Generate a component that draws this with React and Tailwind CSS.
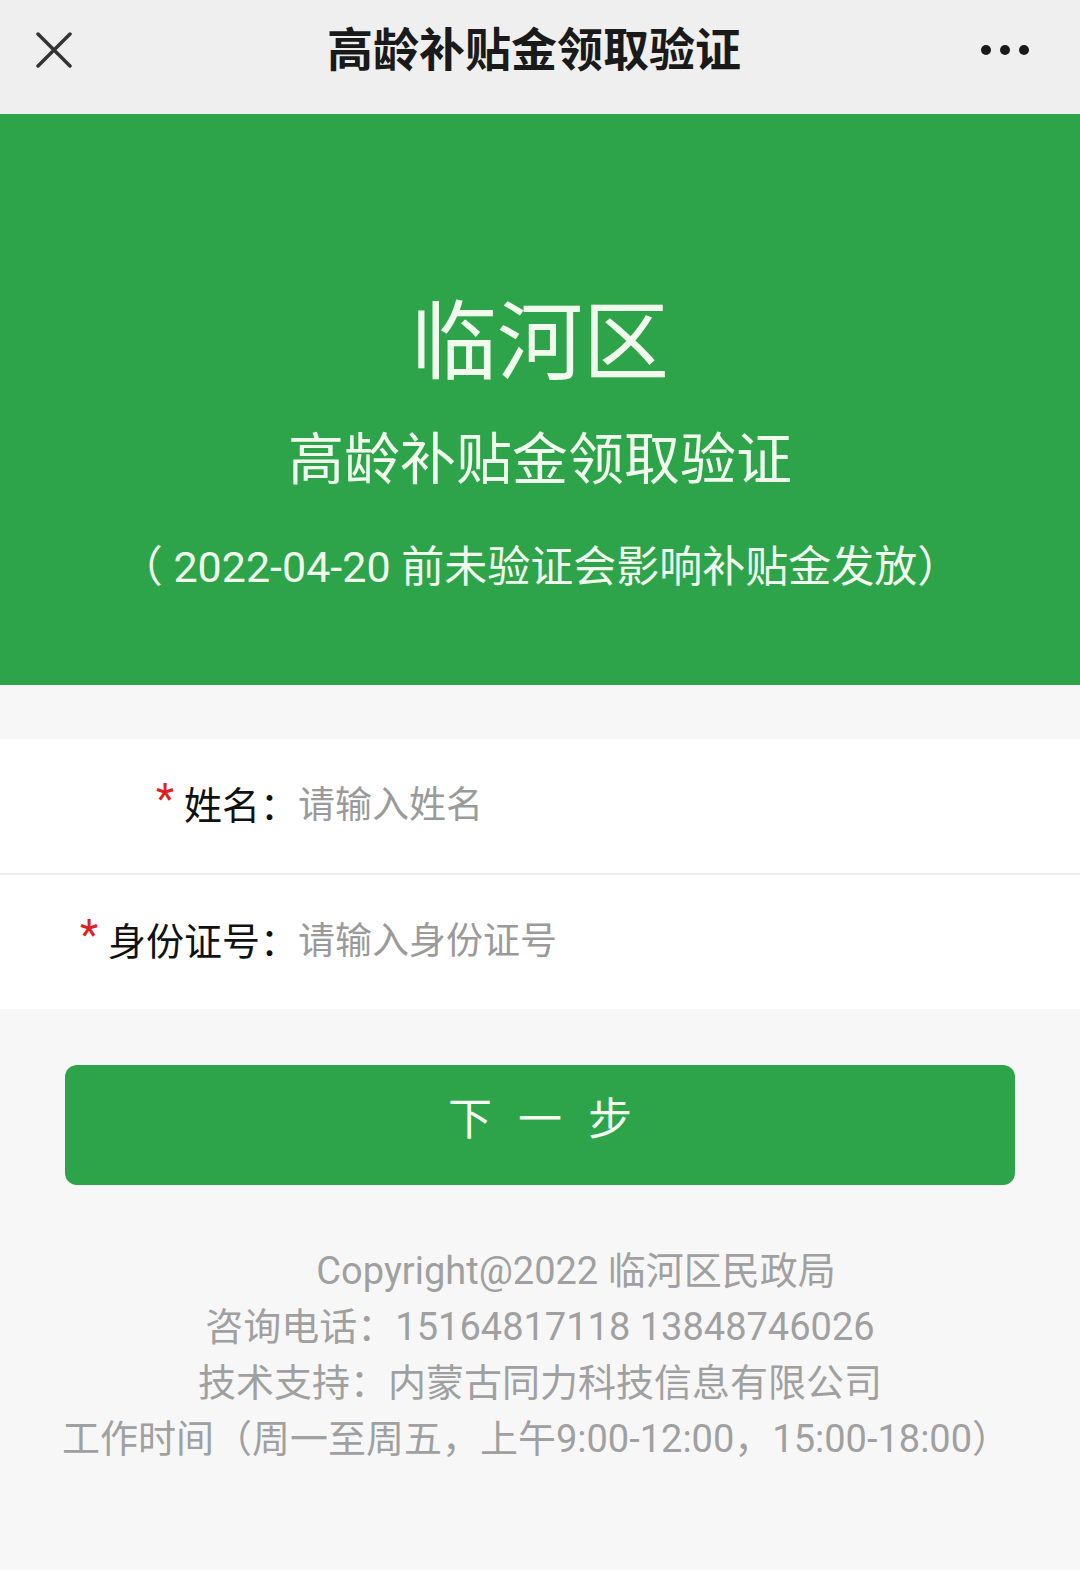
import React from 'react';

const font = { fontFamily: 'Roboto, "Noto Sans CJK SC", "Noto Sans", sans-serif' };

const Field = ({ label, placeholder }) => (
  <div className="flex items-center h-[134px]">
    <div className="w-[298px] shrink-0 flex justify-end items-center">
      <span className="text-[42px] text-[#e02020] leading-none mr-[10px] -mt-[14px]">*</span>
      <span className="text-[38px] text-[#111]">{label}：</span>
    </div>
    <input
      className="flex-1 bg-transparent outline-none text-[37px] text-[#333] placeholder:text-[#9a9a9a]"
      placeholder={placeholder}
      style={font}
    />
  </div>
);

export default function App() {
  return (
    <div className="min-h-[1570px] bg-[#f7f7f7]" style={font}>
      {/* top bar */}
      <header className="h-[114px] bg-[#efefef] grid grid-cols-[1fr_auto_1fr] items-center px-[36px]">
        <svg width="36" height="36" viewBox="0 0 36 36" className="-mt-[14px]">
          <path d="M2 2 L34 34 M34 2 L2 34" stroke="#333" strokeWidth="3.5" strokeLinecap="round" />
        </svg>
        <h1 className="text-[46px] font-bold text-[#1a1a1a] -mt-[14px] -ml-[12px]">高龄补贴金领取验证</h1>
        <div className="flex justify-end gap-[9px] -mt-[14px] mr-[15px]">
          <span className="w-[10px] h-[10px] rounded-full bg-[#1a1a1a]" />
          <span className="w-[10px] h-[10px] rounded-full bg-[#1a1a1a]" />
          <span className="w-[10px] h-[10px] rounded-full bg-[#1a1a1a]" />
        </div>
      </header>

      {/* banner */}
      <section className="bg-[#2ea44a] text-[#f0fbee] text-center pt-[180px] pb-[90px]">
        <div className="text-[86px] leading-[100px]">临河区</div>
        <div className="text-[56px] leading-[70px] mt-[31px]">高龄补贴金领取验证</div>
        <div className="text-[43px] leading-[56px] mt-[44px]">（ 2022-04-20 前未验证会影响补贴金发放）</div>
      </section>

      {/* form */}
      <div className="mt-[54px] bg-white">
        <div className="border-b-2 border-[#eeeeee]">
          <Field label="姓名" placeholder="请输入姓名" />
        </div>
        <Field label="身份证号" placeholder="请输入身份证号" />
      </div>

      <div className="px-[65px] pt-[56px]">
        <button className="w-full h-[120px] rounded-[12px] bg-[#2ea44a] text-[#f2fff0] text-[44px] tracking-[26px] pl-[26px] pb-[10px]">
          下一步
        </button>
      </div>

      {/* footer */}
      <footer className="mt-[58px] text-center text-[38px] leading-[56px] text-[#a0a0a0] pb-[100px]">
        <p className="pl-[72px]">Copyright@2022 临河区民政局</p>
        <p>咨询电话：15164817118 13848746026</p>
        <p>技术支持：内蒙古同力科技信息有限公司</p>
        <p className="-ml-[8px]">工作时间（周一至周五，上午9:00-12:00，15:00-18:00）</p>
      </footer>
    </div>
  );
}
